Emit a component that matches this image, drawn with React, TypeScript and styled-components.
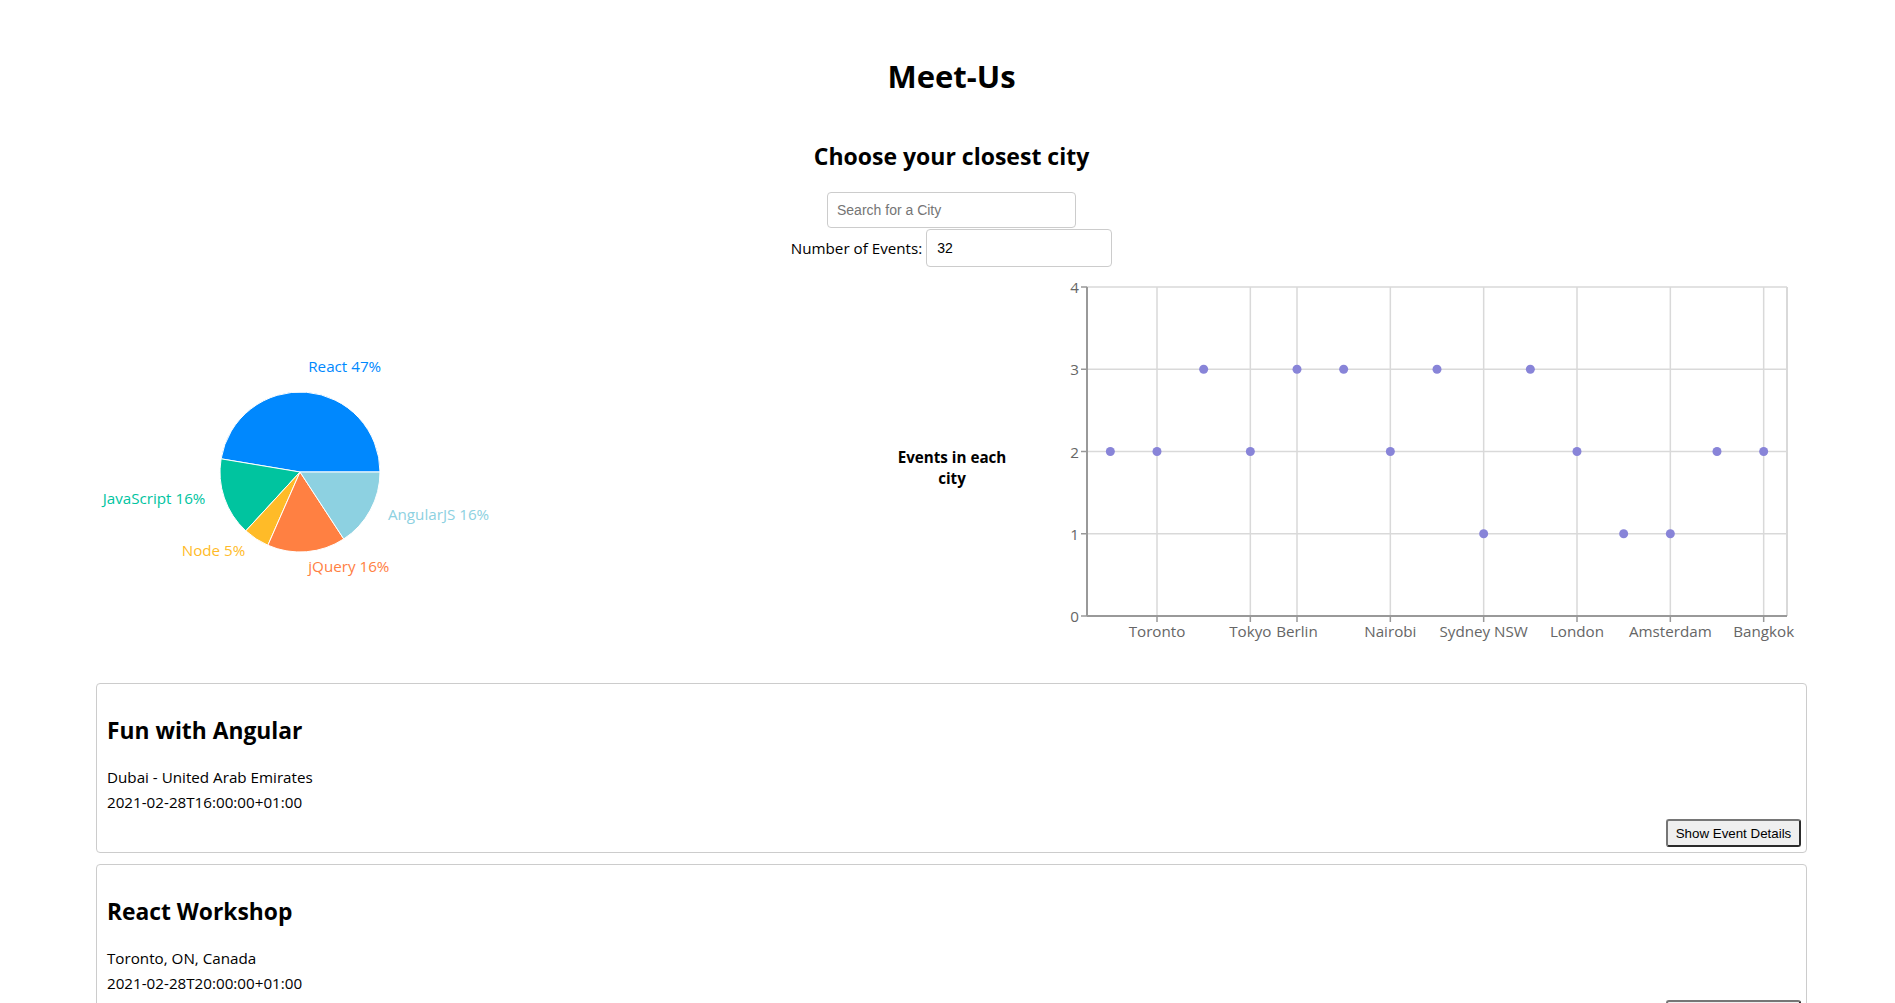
import React from "react";
import styled, { createGlobalStyle } from "styled-components";

type CityCount = { city: string; count: number; tick: boolean };
type Genre = { name: string; value: number; color: string };

const GlobalStyle = createGlobalStyle`
  html, body {
    margin: 0;
    padding: 0;
    background: #fff;
  }
  body {
    font-family: "Open Sans", "Noto Sans", sans-serif;
    color: #000;
  }
`;

const cities: CityCount[] = [
  { city: "Dubai", count: 2, tick: false },
  { city: "Toronto", count: 2, tick: true },
  { city: "Paris", count: 3, tick: false },
  { city: "Tokyo", count: 2, tick: true },
  { city: "Berlin", count: 3, tick: true },
  { city: "Madrid", count: 3, tick: false },
  { city: "Nairobi", count: 2, tick: true },
  { city: "Moscow", count: 3, tick: false },
  { city: "Sydney NSW", count: 1, tick: true },
  { city: "Mumbai", count: 3, tick: false },
  { city: "London", count: 2, tick: true },
  { city: "Rome", count: 1, tick: false },
  { city: "Amsterdam", count: 1, tick: true },
  { city: "Seoul", count: 2, tick: false },
  { city: "Bangkok", count: 2, tick: true },
];

const genres: Genre[] = [
  { name: "React", value: 9, color: "#0088FE" },
  { name: "JavaScript", value: 3, color: "#00C49F" },
  { name: "Node", value: 1, color: "#FFBB28" },
  { name: "jQuery", value: 3, color: "#FF8042" },
  { name: "AngularJS", value: 3, color: "#8DD1E1" },
];

const events = [
  {
    id: 1,
    summary: "Fun with Angular",
    location: "Dubai - United Arab Emirates",
    start: "2021-02-28T16:00:00+01:00",
  },
  {
    id: 2,
    summary: "React Workshop",
    location: "Toronto, ON, Canada",
    start: "2021-02-28T20:00:00+01:00",
  },
];

// pie geometry (svg coords, svg starts at page x=8)
const PIE_CX = 292;
const PIE_CY = 202;
const PIE_R = 80;

const polar = (r: number, deg: number) => {
  const rad = (deg * Math.PI) / 180;
  return { x: PIE_CX + r * Math.cos(rad), y: PIE_CY - r * Math.sin(rad) };
};

const GenrePie: React.FC = () => {
  const total = genres.reduce((s, g) => s + g.value, 0);
  let start = 0;
  return (
    <svg width={492} height={390}>
      {genres.map((g) => {
        const sweep = (g.value / total) * 360;
        const end = start + sweep;
        const mid = start + sweep / 2;
        const a = polar(PIE_R, start);
        const b = polar(PIE_R, end);
        const large = sweep > 180 ? 1 : 0;
        const lbl = polar(PIE_R + 20, mid);
        const d = `M${PIE_CX},${PIE_CY} L${a.x},${a.y} A${PIE_R},${PIE_R} 0 ${large} 0 ${b.x},${b.y} Z`;
        start = end;
        return (
          <g key={g.name}>
            <path d={d} fill={g.color} stroke="#fff" strokeWidth={1} />
            <PieLabel
              x={lbl.x}
              y={lbl.y}
              fill={g.color}
              textAnchor={lbl.x > PIE_CX ? "start" : "end"}
            >
              {`${g.name} ${Math.round((g.value / total) * 100)}%`}
            </PieLabel>
          </g>
        );
      })}
    </svg>
  );
};

// scatter geometry (svg coords)
const X0 = 47;
const X1 = 747;
const Y0 = 17;
const Y1 = 346;

const CityScatter: React.FC = () => {
  const band = (X1 - X0) / cities.length;
  const xOf = (i: number) => X0 + band / 2 + i * band;
  const yOf = (v: number) => Y1 - (v * (Y1 - Y0)) / 4;
  const yTicks = [0, 1, 2, 3, 4];

  return (
    <svg width={780} height={390}>
      {/* grid */}
      {yTicks
        .filter((v) => v > 0)
        .map((v) => (
          <line key={v} x1={X0} x2={X1} y1={yOf(v)} y2={yOf(v)} stroke="#d9d9d9" strokeWidth={1.5} />
        ))}
      {cities.map((c, i) =>
        c.tick ? (
          <line key={c.city} x1={xOf(i)} x2={xOf(i)} y1={Y0} y2={Y1} stroke="#d9d9d9" strokeWidth={1.5} />
        ) : null
      )}
      <line x1={X1} x2={X1} y1={Y0} y2={Y1} stroke="#d9d9d9" strokeWidth={2} />

      {/* axes */}
      <line x1={X0} x2={X0} y1={Y0} y2={Y1} stroke="#999" strokeWidth={2} />
      <line x1={X0} x2={X1} y1={Y1} y2={Y1} stroke="#999" strokeWidth={2} />
      {yTicks.map((v) => (
        <g key={v}>
          <line x1={X0 - 6} x2={X0} y1={yOf(v)} y2={yOf(v)} stroke="#999" strokeWidth={1.5} />
          <TickText x={X0 - 8} y={yOf(v) + 6} textAnchor="end">
            {v}
          </TickText>
        </g>
      ))}
      {cities.map((c, i) =>
        c.tick ? (
          <g key={c.city}>
            <line x1={xOf(i)} x2={xOf(i)} y1={Y1} y2={Y1 + 6} stroke="#999" strokeWidth={1.5} />
            <TickText x={xOf(i)} y={367} textAnchor="middle">
              {c.city}
            </TickText>
          </g>
        ) : null
      )}

      {/* points */}
      {cities.map((c, i) => (
        <circle key={c.city} cx={xOf(i)} cy={yOf(c.count)} r={4.5} fill="#8884d8" />
      ))}
    </svg>
  );
};

const App: React.FC = () => {
  return (
    <Page>
      <GlobalStyle />
      <Title>Meet-Us</Title>
      <CityHeading>Choose your closest city</CityHeading>
      <SearchInput type="text" placeholder="Search for a City" />
      <NumberRow>
        <NumberLabel>Number of Events:</NumberLabel>
        <NumberInput type="text" defaultValue="32" />
      </NumberRow>

      <ChartRow>
        <PieBox>
          <GenrePie />
        </PieBox>
        <AxisLabel>Events in each city</AxisLabel>
        <ScatterBox>
          <CityScatter />
        </ScatterBox>
      </ChartRow>

      <EventList>
        {events.map((ev) => (
          <EventCard key={ev.id}>
            <EventTitle>{ev.summary}</EventTitle>
            <EventText>{ev.location}</EventText>
            <EventText>{ev.start}</EventText>
            <CardFooter>
              <DetailsButton>Show Event Details</DetailsButton>
            </CardFooter>
          </EventCard>
        ))}
      </EventList>
    </Page>
  );
};

export default App;

const Page = styled.div`
  padding-left: 8px;
  display: flex;
  flex-direction: column;
  align-items: center;
  padding-bottom: 40px;
`;

const Title = styled.h1`
  margin: 56px 0 0;
  font-size: 31px;
  line-height: 40px;
  font-weight: 700;
`;

const CityHeading = styled.h2`
  margin: 44px 0 0;
  font-size: 23px;
  line-height: 32px;
  font-weight: 700;
`;

const SearchInput = styled.input`
  box-sizing: border-box;
  margin-top: 20px;
  width: 249px;
  height: 36px;
  padding: 0 9px;
  border: 1px solid #ccc;
  border-radius: 4px;
  font-family: "Liberation Sans", Arial, sans-serif;
  font-size: 14px;
  outline: none;

  &::placeholder {
    color: #757575;
  }
`;

const NumberRow = styled.div`
  display: flex;
  align-items: center;
  gap: 4px;
  margin-top: 1px;
`;

const NumberLabel = styled.label`
  font-size: 15.2px;
  line-height: 22px;
`;

const NumberInput = styled.input`
  box-sizing: border-box;
  width: 186px;
  height: 38px;
  padding: 0 10px;
  border: 1px solid #ccc;
  border-radius: 4px;
  font-family: "Liberation Sans", Arial, sans-serif;
  font-size: 14px;
  color: #000;
  outline: none;
`;

const ChartRow = styled.div`
  align-self: stretch;
  display: flex;
  align-items: flex-start;
  height: 390px;
  margin-top: 3px;
`;

const PieBox = styled.div`
  width: 492px;
  flex-shrink: 0;
`;

const PieLabel = styled.text`
  font-size: 15.2px;
`;

const AxisLabel = styled.div`
  margin-left: 392px;
  width: 120px;
  flex-shrink: 0;
  padding-top: 177px;
  font-size: 15.2px;
  line-height: 21px;
  font-weight: 700;
  text-align: center;
`;

const ScatterBox = styled.div`
  margin-left: 28px;
  flex-shrink: 0;
`;

const TickText = styled.text`
  font-size: 15.2px;
  fill: #666;
`;

const EventList = styled.div`
  align-self: stretch;
  display: flex;
  flex-direction: column;
  gap: 11px;
  margin: 23px 88px 0;
`;

const EventCard = styled.div`
  border: 1px solid #ccc;
  border-radius: 4px;
  padding: 10px 5px 5px 10px;
`;

const EventTitle = styled.h2`
  margin: 21px 0 18px;
  font-size: 22.8px;
  line-height: 32px;
  font-weight: 700;
`;

const EventText = styled.p`
  margin: 0;
  font-size: 15.2px;
  line-height: 25px;
`;

const CardFooter = styled.div`
  display: flex;
  justify-content: flex-end;
  margin-top: 4px;
`;

const DetailsButton = styled.button`
  box-sizing: border-box;
  width: 135px;
  height: 28px;
  padding: 0;
  border-style: solid;
  border-width: 2px;
  border-color: #767676 #2b2b2b #2b2b2b #767676;
  border-radius: 3px;
  background: #efefef;
  font-family: "Liberation Sans", Arial, sans-serif;
  font-size: 13.33px;
  color: #000;
  cursor: pointer;
`;
